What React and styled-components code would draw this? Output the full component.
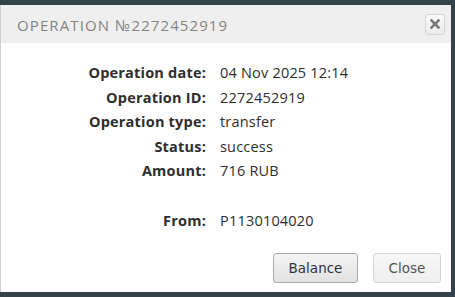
import React from 'react';
import styled, { createGlobalStyle } from 'styled-components';

const GlobalStyle = createGlobalStyle`
  html, body {
    margin: 0;
    padding: 0;
    background: #36424a;
    width: 455px;
    height: 297px;
    overflow: hidden;
  }
`;

const rows = [
  { label: 'Operation date:', value: '04 Nov 2025 12:14' },
  { label: 'Operation ID:', value: '2272452919' },
  { label: 'Operation type:', value: 'transfer' },
  { label: 'Status:', value: 'success' },
  { label: 'Amount:', value: '716 RUB' },
];

const App = () => {
  return (
    <>
      <GlobalStyle />
      <Page>
        <Dialog>
          <Header>
            <Title>Operation №2272452919</Title>
            <CloseIcon aria-label="close">
              <svg width="10" height="10" viewBox="0 0 10 10">
                <path d="M1.5 1.5 L8.5 8.5 M8.5 1.5 L1.5 8.5" stroke="#777" strokeWidth="2.6" strokeLinecap="square" />
              </svg>
            </CloseIcon>
          </Header>
          <Body>
            <Details>
              {rows.map((r) => (
                <React.Fragment key={r.label}>
                  <Label>{r.label}</Label>
                  <Value>{r.value}</Value>
                </React.Fragment>
              ))}
              <Spacer />
              <Label>From:</Label>
              <Value>P1130104020</Value>
            </Details>
          </Body>
          <Footer>
            <Button>Balance</Button>
            <Button $muted>Close</Button>
          </Footer>
        </Dialog>
      </Page>
    </>
  );
};

export default App;

const Page = styled.div`
  padding: 5px 3px 0 0;
`;

const Dialog = styled.div`
  width: 451px;
  height: 287px;
  box-sizing: border-box;
  background: #fff;
  border-left: 1px solid #cfcfcf;
  display: flex;
  flex-direction: column;
`;

const Header = styled.div`
  height: 38px;
  background: #efefef;
  display: flex;
  align-items: center;
  justify-content: space-between;
  padding: 0 6px 0 16px;
`;

const Title = styled.div`
  font-family: 'Open Sans', sans-serif;
  font-size: 15px;
  letter-spacing: 1.1px;
  text-transform: uppercase;
  color: #838383;
  padding-top: 2px;
`;

const CloseIcon = styled.div`
  width: 18px;
  height: 19px;
  border: 1px solid #d4d4d4;
  border-radius: 3px;
  background: linear-gradient(#fafafa, #ebebeb);
  display: flex;
  align-items: center;
  justify-content: center;
`;

const Body = styled.div`
  flex: 1;
  padding-top: 20px;
`;

const Details = styled.div`
  display: grid;
  grid-template-columns: 205px auto;
  column-gap: 14px;
  row-gap: 5.5px;
  font-family: 'Open Sans', sans-serif;
  font-size: 14.5px;
  letter-spacing: 0.2px;
  line-height: 19px;
  color: #2e2e2e;
`;

const Label = styled.div`
  font-weight: 700;
  text-align: right;
`;

const Value = styled.div``;

const Spacer = styled.div`
  grid-column: 1 / span 2;
  height: 20px;
`;

const Footer = styled.div`
  display: flex;
  justify-content: flex-end;
  gap: 15px;
  padding: 0 10px 9px 0;
`;

const Button = styled.button`
  height: 30px;
  padding: 0 ${({ $muted }) => ($muted ? '13px' : '14px')};
  min-width: ${({ $muted }) => ($muted ? '68px' : '85px')};
  border: 1px solid ${({ $muted }) => ($muted ? '#d6d6d6' : '#a9a9a9')};
  border-radius: 3px;
  background: ${({ $muted }) =>
    $muted ? 'linear-gradient(#f7f7f7, #efefef)' : 'linear-gradient(#f4f4f4, #e2e2e2)'};
  font-family: 'DejaVu Sans', Verdana, sans-serif;
  font-size: 13.5px;
  color: ${({ $muted }) => ($muted ? '#555' : '#333')};
`;
